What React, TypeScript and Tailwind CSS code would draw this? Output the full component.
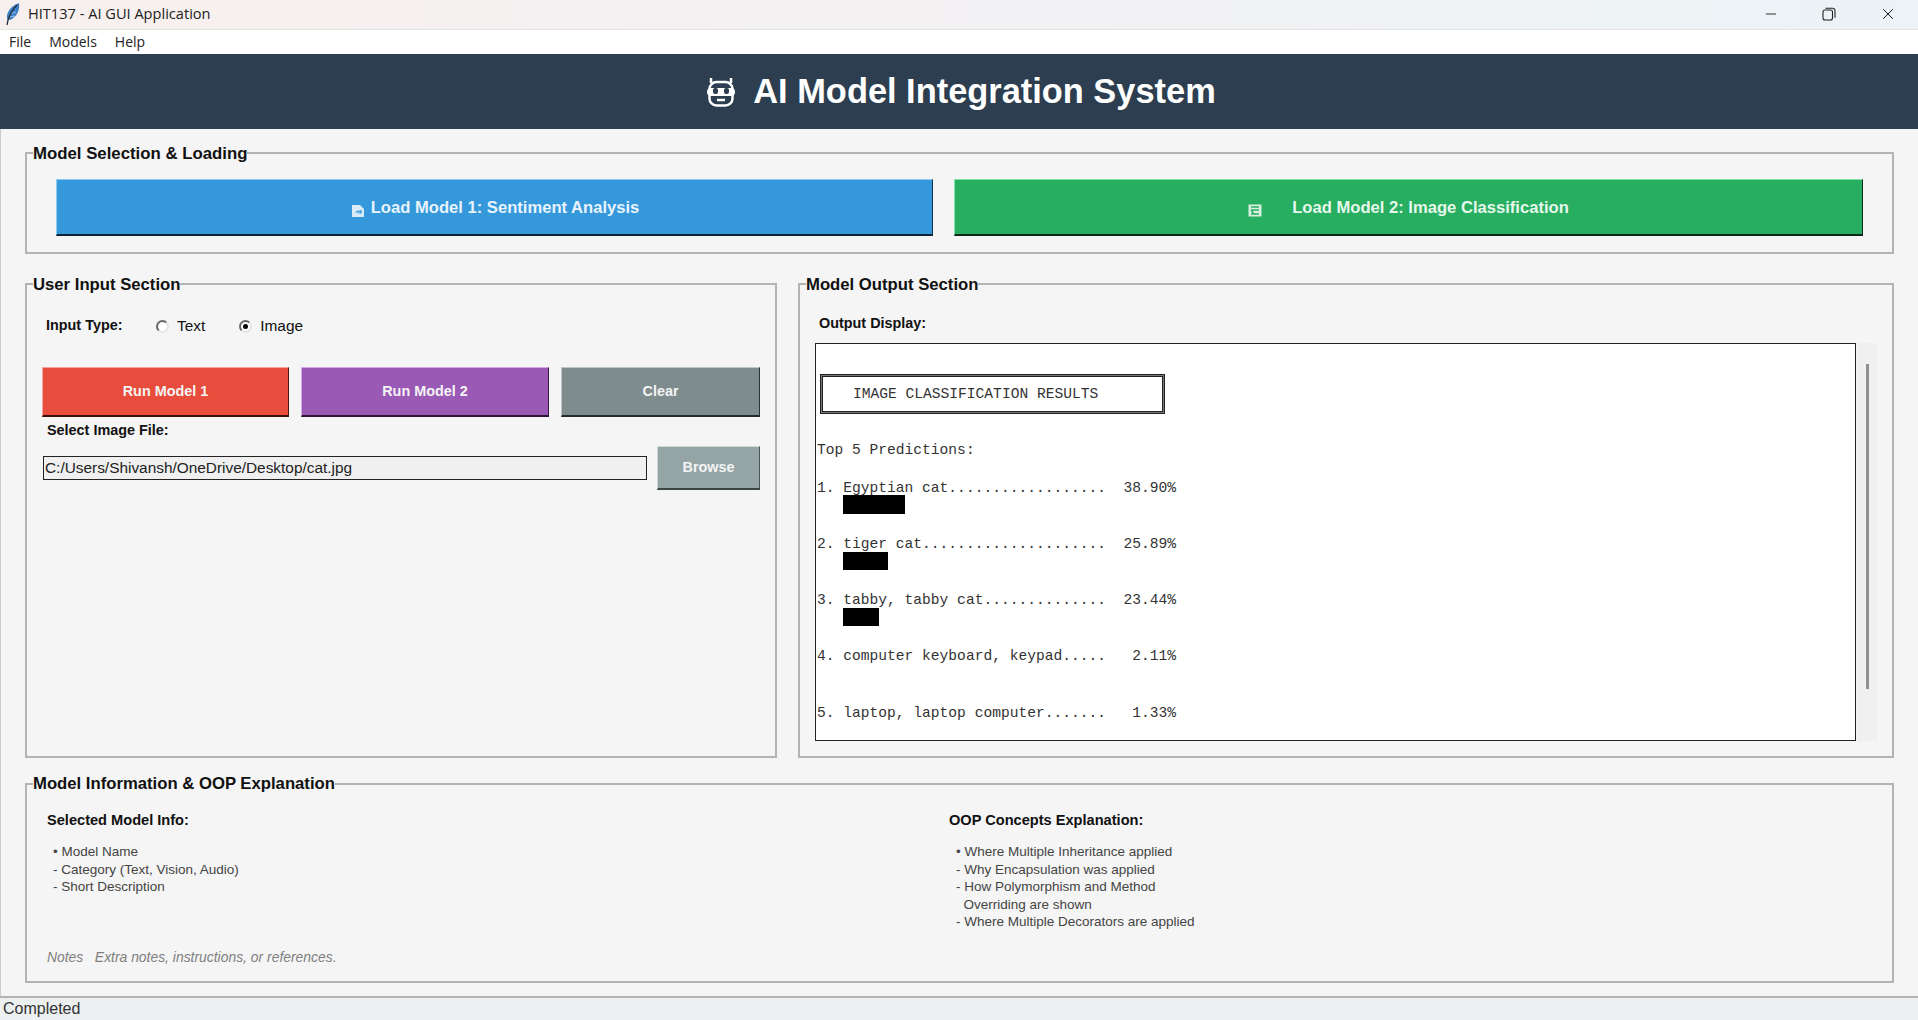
import { Minus, X } from "lucide-react"

const predictions = [
  { name: "1. Egyptian cat", pct: "38.90%", bar: 62 },
  { name: "2. tiger cat", pct: "25.89%", bar: 45 },
  { name: "3. tabby, tabby cat", pct: "23.44%", bar: 36 },
  { name: "4. computer keyboard, keypad", pct: "2.11%", bar: 0 },
  { name: "5. laptop, laptop computer", pct: "1.33%", bar: 0 },
]

const modelInfo = ["• Model Name", "- Category (Text, Vision, Audio)", "- Short Description"]
const oopInfo = [
  "• Where Multiple Inheritance applied",
  "- Why Encapsulation was applied",
  "- How Polymorphism and Method",
  "  Overriding are shown",
  "- Where Multiple Decorators are applied",
]

function Feather() {
  return (
    <svg width="15" height="23" viewBox="0 0 15 23">
      <path d="M2 16C1 9 6 3 14 0c1 7-2 14-9 17z" fill="#3f7fc4" />
      <path d="M5 11l6-2M4 14l6-1" stroke="#a9cdf0" strokeWidth="0.8" />
      <path d="M12 2C8 6 5 11 3 17L2 22" fill="none" stroke="#23303d" strokeWidth="1.3" />
    </svg>
  )
}

function RobotIcon() {
  return (
    <svg width="30" height="30" viewBox="0 0 30 30" fill="none" stroke="#fff">
      <path d="M5 1v5M25 1v5" strokeWidth="2.5" />
      <rect x="3.5" y="5" width="23" height="23.5" rx="7" strokeWidth="2.5" />
      <rect x="1" y="11" width="28" height="8" rx="4" fill="#fff" stroke="none" />
      <rect x="7" y="11" width="5" height="6" rx="2" fill="#2c3e50" stroke="none" />
      <rect x="18" y="11" width="5" height="6" rx="2" fill="#2c3e50" stroke="none" />
      <path d="M11 23h8" strokeWidth="2.5" />
    </svg>
  )
}

function SaveIcon() {
  return (
    <svg width="13" height="14" viewBox="0 0 13 14">
      <path d="M0 1h8l4 4v8H0z" fill="#dbeaf7" />
      <path d="M4 9a3 3 0 0 1 5-1M9 6v3H6" fill="none" stroke="#3498db" strokeWidth="1.2" />
    </svg>
  )
}

function ImageIcon() {
  return (
    <svg width="14" height="13" viewBox="0 0 14 13">
      <rect x="0.5" y="0.5" width="13" height="12" fill="#d9f0e1" />
      <path d="M3 3h8M3 6h8M3 6l3 4M3 10h8" stroke="#27ae60" strokeWidth="1.3" fill="none" />
    </svg>
  )
}

function Radio({ checked }: { checked?: boolean }) {
  return (
    <div className="flex h-[13px] w-[13px] items-center justify-center rounded-full border-2 border-t-[#666] border-l-[#666] border-r-[#e4e4e4] border-b-[#e4e4e4] bg-white">
      {checked && <div className="h-[5px] w-[5px] rounded-full bg-black" />}
    </div>
  )
}

function App() {
  return (
    <div className="flex h-[1020px] w-[1918px] flex-col overflow-hidden bg-[#f5f5f5] font-['Liberation_Sans',sans-serif] text-[#111]">
      {/* Window title bar */}
      <div className="flex h-[30px] items-center border-b border-[#e6e6e6] bg-gradient-to-r from-[#f8f0ee] via-[#f3f1f3] to-[#ebf3f6] pb-[1px] pl-[5px] font-['Open_Sans',sans-serif] text-[14.6px] text-[#222]">
        <Feather />
        <span className="ml-[8px]">HIT137 - AI GUI Application</span>
        <div className="ml-auto flex items-center">
          <Minus size={16} strokeWidth={1.2} className="mr-[43px] text-black" />
          <svg width="14" height="14" viewBox="0 0 14 14" fill="none" stroke="#222" strokeWidth="1.1" className="mr-[43px]">
            <rect x="1" y="3" width="9.5" height="10" rx="2" />
            <path d="M3.5 1.2h7a2.5 2.5 0 0 1 2.5 2.5v7" />
          </svg>
          <X size={18} strokeWidth={1.2} className="mr-[21px] text-black" />
        </div>
      </div>

      {/* Menu */}
      <div className="flex h-[24px] items-center gap-[18px] bg-white pb-[2px] pl-[9px] font-['Open_Sans',sans-serif] text-[14px] text-[#222]">
        <span>File</span>
        <span>Models</span>
        <span>Help</span>
      </div>

      {/* Header */}
      <div className="flex h-[75px] items-center justify-center gap-[17px] bg-[#2c3e50] pl-[4px] text-white">
        <RobotIcon />
        <h1 className="text-[34.4px] leading-none font-bold">AI Model Integration System</h1>
      </div>

      <div className="flex flex-1 flex-col border-l border-[#ccc] pr-[24px] pl-[24px]">
        {/* Model selection */}
        <fieldset className="mt-[15px] h-[110px] border-2 border-[#b4b4b4]">
          <legend className="ml-[6px] translate-y-[1px] text-[16.8px] leading-[18px] font-bold">Model Selection &amp; Loading</legend>
          <div className="flex gap-[21px] pt-[17px] pl-[29px]">
            <button className="flex h-[57px] w-[877px] items-center justify-center gap-[6px] border border-b-2 border-t-[#8ccbf3] border-l-[#8ccbf3] border-r-[#10304a] border-b-[#0c2436] bg-[#3498db] pt-[2px] pl-[2px] text-[16.6px] font-bold text-[#e8f3fb]">
              <span className="mt-[5px]">
                <SaveIcon />
              </span>
              Load Model 1: Sentiment Analysis
            </button>
            <button className="flex h-[57px] w-[909px] items-center justify-center gap-[30px] border border-b-2 border-t-[#7fe3a6] border-l-[#7fe3a6] border-r-[#0c2f1a] border-b-[#0a2615] bg-[#27ae60] pt-[2px] text-[16.6px] font-bold text-[#e6f7ec]">
              <span className="mt-[5px]">
                <ImageIcon />
              </span>
              Load Model 2: Image Classification
            </button>
          </div>
        </fieldset>

        <div className="mt-[21px] grid h-[483px] grid-cols-[752px_1fr] gap-x-[21px]">
          {/* User input */}
          <fieldset className="border-2 border-[#b4b4b4]">
            <legend className="ml-[6px] translate-y-[1px] text-[16.7px] leading-[18px] font-bold">User Input Section</legend>
            <div className="mt-[23px] flex h-[20px] items-center pl-[19px]">
              <span className="w-[110px] text-[14.4px] font-bold">Input Type:</span>
              <Radio />
              <span className="mr-[34px] ml-[8px] text-[15.4px]">Text</span>
              <Radio checked />
              <span className="ml-[8px] text-[15.4px]">Image</span>
            </div>
            <div className="mt-[31px] flex gap-[12px] pl-[15px] text-[14.4px] font-bold text-[#f4f4f4]">
              <button className="h-[50px] w-[247px] border border-b-2 border-t-[#f5a59c] border-l-[#f5a59c] border-r-[#4a1510] border-b-[#3a100c] bg-[#e74c3c]">
                Run Model 1
              </button>
              <button className="h-[50px] w-[248px] border border-b-2 border-t-[#d6a9ea] border-l-[#d6a9ea] border-r-[#33183f] border-b-[#2c1436] bg-[#9b59b6]">
                Run Model 2
              </button>
              <button className="h-[50px] w-[199px] border border-b-2 border-t-[#bcc8c8] border-l-[#bcc8c8] border-r-[#2a3333] border-b-[#222a2a] bg-[#7f8c8d]">
                Clear
              </button>
            </div>
            <div className="mt-[5px] h-[16px] pl-[20px] text-[14.4px] leading-[16px] font-bold">Select Image File:</div>
            <div className="mt-[8px] flex items-center gap-[10px] pl-[16px]">
              <div className="flex h-[24px] w-[604px] items-center border border-[#222] bg-[#f0f0f0] pl-[1px] text-[15.4px] text-[#222]">
                C:/Users/Shivansh/OneDrive/Desktop/cat.jpg
              </div>
              <button className="h-[44px] w-[103px] border border-b-2 border-t-[#cfd8d8] border-l-[#cfd8d8] border-r-[#4a5454] border-b-[#3c4444] bg-[#95a5a6] text-[14.4px] font-bold text-[#f2f4f4]">
                Browse
              </button>
            </div>
          </fieldset>

          {/* Output */}
          <fieldset className="border-2 border-[#b4b4b4]">
            <legend className="ml-[6px] translate-y-[1px] text-[16.7px] leading-[18px] font-bold">Model Output Section</legend>
            <div className="pt-[22px] pl-[15px]">
              <div className="ml-[4px] h-[16px] text-[14.4px] leading-[16px] font-bold">Output Display:</div>
              <div className="mt-[12px] flex h-[398px]">
                <div className="w-[1041px] border border-[#222] bg-white pl-[1px] font-['Liberation_Mono',monospace] text-[14.6px] leading-[18.77px] whitespace-pre text-[#333]">
                  <div className="mt-[30px] ml-[3px] h-[40px] w-[345px] border border-[#222] bg-[#777] p-[1px]">
                    <div className="flex h-full items-center border border-[#222] bg-white pl-[30px]">IMAGE CLASSIFICATION RESULTS</div>
                  </div>
                  <div className="mt-[27px] h-[37.5px]">Top 5 Predictions:</div>
                  {predictions.map((p) => (
                    <div key={p.name} className="h-[56.3px]">
                      <div className="h-[18.77px]">
                        {p.name.padEnd(33, ".")}
                        {p.pct.padStart(8, " ")}
                      </div>
                      {p.bar > 0 && <div className="-mt-[2px] ml-[26px] h-[18.6px] bg-black" style={{ width: p.bar }} />}
                    </div>
                  ))}
                </div>
                <div className="ml-[1px] w-[20px] bg-[#f0f0f0] pt-[21px] pl-[9px]">
                  <div className="h-[325px] w-[3px] bg-[#8f8f8f]" />
                </div>
              </div>
            </div>
          </fieldset>
        </div>

        {/* Info */}
        <fieldset className="mt-[17px] h-[208px] border-2 border-[#b4b4b4]">
          <legend className="ml-[6px] text-[16.7px] leading-[18px] font-bold">Model Information &amp; OOP Explanation</legend>
          <div className="pt-[19px] pl-[20px]">
            <div className="grid h-[137px] grid-cols-[902px_1fr]">
              <div>
                <div className="h-[16px] text-[14.6px] leading-[16px] font-bold">Selected Model Info:</div>
                <div className="mt-[15px] pl-[6px] text-[13.5px] leading-[17.5px] whitespace-pre text-[#444]">
                  {modelInfo.map((l) => (
                    <div key={l}>{l}</div>
                  ))}
                </div>
              </div>
              <div>
                <div className="h-[16px] text-[14.6px] leading-[16px] font-bold">OOP Concepts Explanation:</div>
                <div className="mt-[15px] pl-[7px] text-[13.5px] leading-[17.5px] whitespace-pre text-[#444]">
                  {oopInfo.map((l) => (
                    <div key={l}>{l}</div>
                  ))}
                </div>
              </div>
            </div>
            <div className="h-[16px] text-[13.9px] leading-[16px] whitespace-pre text-[#7f7f7f] italic">Notes   Extra notes, instructions, or references.</div>
          </div>
        </fieldset>
      </div>

      {/* Status bar */}
      <div className="flex h-[24px] items-center border-t-2 border-[#b4b4b4] bg-[#ecf0f1] pl-[3px] text-[16px] text-[#333]">Completed</div>
    </div>
  )
}

export default App
